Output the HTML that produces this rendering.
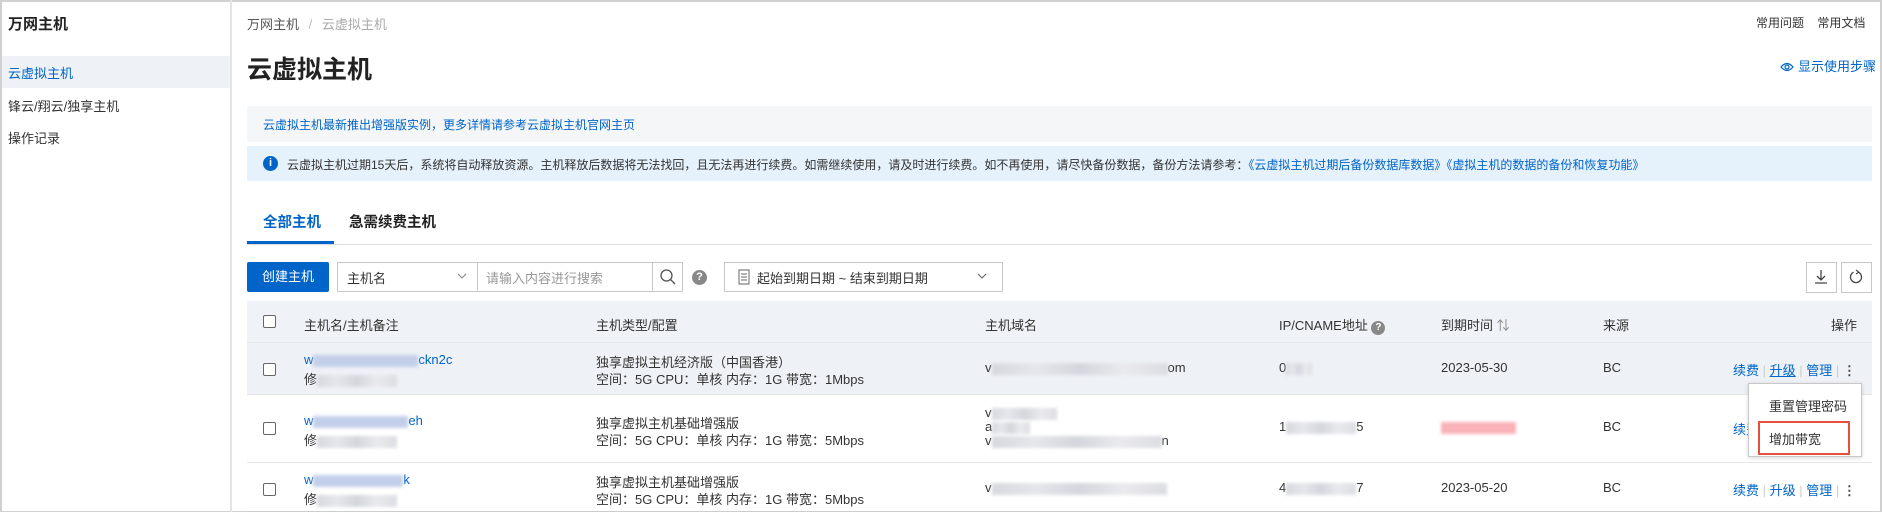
<!DOCTYPE html>
<html><head><meta charset="utf-8"><style>
*{box-sizing:border-box;margin:0;padding:0}
body{width:1882px;height:512px;overflow:hidden;background:#fff;font-family:"Liberation Sans","Noto Sans CJK SC",sans-serif;font-size:13px;color:#333;position:relative}
.frame{position:absolute;left:0;top:0;width:1882px;height:512px;border:2px solid #d0d0d0;border-bottom:1px solid #d0d0d0}
.a{position:absolute;white-space:nowrap}
.side{position:absolute;left:0;top:0;width:232px;height:512px;border-right:2px solid #e4e4e4}
.blue{color:#0064c8}
.blur{display:inline-block;height:12px;vertical-align:middle;background:linear-gradient(90deg,#d6d8de,#e6e7ec,#d3d6dc,#eaeaee,#dcdde2);filter:blur(1.5px)}
.hd{position:absolute;left:247px;top:301px;width:1625px;height:42px;background:#eff2f6;border-bottom:1px solid #e3e5e8}
.row{position:absolute;left:247px;width:1625px;border-bottom:1px solid #e3e5e8}
.cb{position:absolute;left:16px;width:13px;height:13px;border:1px solid #666;border-radius:2px;background:#fff}
.box{position:absolute;border:1px solid #c8c8c8;background:#fff}
</style></head><body>
<div class="frame"></div>
<div class="side">
 <div class="a" style="left:8px;top:13px;font-size:15px;font-weight:bold;color:#222">万网主机</div>
 <div class="a" style="left:2px;top:56px;width:228px;height:32px;background:#eef1f5"></div>
 <div class="a blue" style="left:8px;top:63px;font-size:13px">云虚拟主机</div>
 <div class="a" style="left:8px;top:96px;font-size:13px">锋云/翔云/独享主机</div>
 <div class="a" style="left:8px;top:128px;font-size:13px">操作记录</div>
</div>
<div class="a" style="left:247px;top:14px;color:#555">万网主机 <span style="color:#bbb;margin:0 6px">/</span> <span style="color:#aaa">云虚拟主机</span></div>
<div class="a" style="left:1756px;top:14px;font-size:12px;color:#333">常用问题 &nbsp;&nbsp; 常用文档</div>
<div class="a" style="left:247px;top:50px;font-size:25px;font-weight:bold;color:#222">云虚拟主机</div>
<div class="a blue" style="left:1780px;top:56px;font-size:13px"><svg width="14" height="10" viewBox="0 0 14 10" style="vertical-align:-1px;margin-right:4px"><path d="M1 5Q7 -2 13 5Q7 12 1 5Z" fill="none" stroke="#0064c8" stroke-width="1.2"/><circle cx="7" cy="5" r="2" fill="none" stroke="#0064c8" stroke-width="1.2"/></svg>显示使用步骤</div>
<div class="a" style="left:247px;top:106px;width:1625px;height:36px;background:#f5f6f7"></div>
<div class="a blue" style="left:263px;top:116px;font-size:12px">云虚拟主机最新推出增强版实例，更多详情请参考云虚拟主机官网主页</div>
<div class="a" style="left:247px;top:146px;width:1625px;height:35px;background:#e5f1fb"></div>
<div class="a" style="left:263px;top:156px;width:15px;height:15px;border-radius:50%;background:#0064c8;color:#fff;font-size:11px;font-weight:bold;text-align:center;line-height:15px">i</div>
<div class="a" style="left:287px;top:156px;font-size:12px;color:#333">云虚拟主机过期15天后，系统将自动释放资源。主机释放后数据将无法找回，且无法再进行续费。如需继续使用，请及时进行续费。如不再使用，请尽快备份数据，备份方法请参考：<span class="blue">《云虚拟主机过期后备份数据库数据》《虚拟主机的数据的备份和恢复功能》</span></div>
<div class="a" style="left:263px;top:211px;font-size:14.5px;font-weight:bold" ><span class="blue">全部主机</span></div>
<div class="a" style="left:349px;top:211px;font-size:14.5px;font-weight:bold;color:#222">急需续费主机</div>
<div class="a" style="left:247px;top:244px;width:1625px;height:1px;background:#ddd"></div>
<div class="a" style="left:247px;top:241px;width:87px;height:3px;background:#0064c8"></div>
<div class="a" style="left:247px;top:262px;width:82px;height:30px;background:#0064c8;color:#fff;text-align:center;line-height:30px;border-radius:2px">创建主机</div>
<div class="box" style="left:337px;top:262px;width:346px;height:30px"></div>
<div class="a" style="left:477px;top:262px;width:1px;height:30px;background:#c8c8c8"></div>
<div class="a" style="left:652px;top:262px;width:1px;height:30px;background:#c8c8c8"></div>
<div class="a" style="left:347px;top:268px">主机名</div>
<svg class="a" style="left:457px;top:273px" width="10" height="7" viewBox="0 0 10 7"><path d="M1 1l4 4 4-4" fill="none" stroke="#888" stroke-width="1.1"/></svg>
<div class="a" style="left:486px;top:268px;color:#999">请输入内容进行搜索</div>
<svg class="a" style="left:659px;top:268px" width="18" height="18" viewBox="0 0 18 18"><circle cx="7.5" cy="7.5" r="5.5" fill="none" stroke="#555" stroke-width="1.3"/><path d="M11.5 11.5L16 16" stroke="#555" stroke-width="1.3"/></svg>
<div class="a" style="left:692px;top:270px;width:15px;height:15px;border-radius:50%;background:#888;color:#fff;font-size:11px;font-weight:bold;text-align:center;line-height:15px">?</div>
<div class="box" style="left:724px;top:262px;width:279px;height:30px"></div>
<svg class="a" style="left:738px;top:269px" width="12" height="16" viewBox="0 0 12 16"><rect x="1" y="1" width="10" height="14" fill="none" stroke="#666"/><path d="M3 5h6M3 8h6M3 11h6" stroke="#666"/></svg>
<div class="a" style="left:757px;top:268px">起始到期日期 ~ 结束到期日期</div>
<svg class="a" style="left:977px;top:273px" width="10" height="7" viewBox="0 0 10 7"><path d="M1 1l4 4 4-4" fill="none" stroke="#666" stroke-width="1.1"/></svg>
<div class="box" style="left:1806px;top:262px;width:31px;height:31px"></div>
<svg class="a" style="left:1813px;top:268px" width="16" height="18" viewBox="0 0 16 18"><path d="M8 2v10M4 8l4 4 4-4M2 15h12" fill="none" stroke="#444" stroke-width="1.3"/></svg>
<div class="box" style="left:1841px;top:262px;width:31px;height:31px"></div>
<svg class="a" style="left:1848px;top:269px" width="16" height="16" viewBox="0 0 16 16"><path d="M10.5 3.2A5.5 5.5 0 1 1 5.5 3.2" fill="none" stroke="#444" stroke-width="1.3"/><path d="M8 1l2.8 2.2L8 5" fill="none" stroke="#444" stroke-width="1.2"/></svg>
<div class="hd">
 <div class="cb" style="top:14px"></div>
 <div class="a" style="left:57px;top:14px">主机名/主机备注</div>
 <div class="a" style="left:349px;top:14px">主机类型/配置</div>
 <div class="a" style="left:738px;top:14px">主机域名</div>
 <div class="a" style="left:1032px;top:14px">IP/CNAME地址 <span style="display:inline-block;width:14px;height:14px;border-radius:50%;background:#888;color:#fff;font-size:10px;font-weight:bold;text-align:center;line-height:14px">?</span></div>
 <div class="a" style="left:1194px;top:14px">到期时间 <span style="color:#888">⇅</span></div>
 <div class="a" style="left:1356px;top:14px">来源</div>
 <div class="a" style="left:1584px;top:14px">操作</div>
</div>
<div class="row" style="top:343px;height:52px;background:#eef1f6">
 <div class="cb" style="top:20px"></div>
 <div class="a blue" style="left:57px;top:9px">w<span class="blur" style="width:105px;background:#c3cfea"></span>ckn2c</div>
 <div class="a" style="left:57px;top:26px">修<span class="blur" style="width:80px"></span></div>
 <div class="a" style="left:349px;top:9px">独享虚拟主机经济版（中国香港）</div>
 <div class="a" style="left:349px;top:26px">空间：5G CPU：单核 内存：1G 带宽：1Mbps</div>
 <div class="a" style="left:738px;top:17px">v<span class="blur" style="width:176px"></span>om</div>
 <div class="a" style="left:1032px;top:17px">0<span class="blur" style="width:26px"></span></div>
 <div class="a" style="left:1194px;top:17px">2023-05-30</div>
 <div class="a" style="left:1356px;top:17px">BC</div>
 <div class="a blue" style="left:1486px;top:17px">续费 <span style="color:#ccc">|</span> <u>升级</u> <span style="color:#ccc">|</span> 管理 <span style="color:#ccc">|</span> <b style="color:#444">⋮</b></div>
</div>
<div class="row" style="top:395px;height:68px">
 <div class="cb" style="top:27px"></div>
 <div class="a blue" style="left:57px;top:18px">w<span class="blur" style="width:95px;background:#c3cfea"></span>eh</div>
 <div class="a" style="left:57px;top:35px">修<span class="blur" style="width:80px"></span></div>
 <div class="a" style="left:349px;top:18px">独享虚拟主机基础增强版</div>
 <div class="a" style="left:349px;top:35px">空间：5G CPU：单核 内存：1G 带宽：5Mbps</div>
 <div class="a" style="left:738px;top:10px">v<span class="blur" style="width:65px"></span></div>
 <div class="a" style="left:738px;top:24px">a<span class="blur" style="width:38px"></span></div>
 <div class="a" style="left:738px;top:38px">v<span class="blur" style="width:170px"></span>n</div>
 <div class="a" style="left:1032px;top:24px">1<span class="blur" style="width:70px"></span>5</div>
 <div class="a" style="left:1194px;top:24px"><span class="blur" style="width:75px;background:#f8b2b8"></span></div>
 <div class="a" style="left:1356px;top:24px">BC</div>
 <div class="a blue" style="left:1486px;top:24px">续费</div>
</div>
<div class="row" style="top:463px;height:49px;border-bottom:1px solid #ccc">
 <div class="cb" style="top:20px"></div>
 <div class="a blue" style="left:57px;top:9px">w<span class="blur" style="width:90px;background:#c3cfea"></span>k</div>
 <div class="a" style="left:57px;top:26px">修<span class="blur" style="width:80px"></span></div>
 <div class="a" style="left:349px;top:9px">独享虚拟主机基础增强版</div>
 <div class="a" style="left:349px;top:26px">空间：5G CPU：单核 内存：1G 带宽：5Mbps</div>
 <div class="a" style="left:738px;top:17px">v<span class="blur" style="width:175px"></span></div>
 <div class="a" style="left:1032px;top:17px">4<span class="blur" style="width:70px"></span>7</div>
 <div class="a" style="left:1194px;top:17px">2023-05-20</div>
 <div class="a" style="left:1356px;top:17px">BC</div>
 <div class="a blue" style="left:1486px;top:17px">续费 <span style="color:#ccc">|</span> 升级 <span style="color:#ccc">|</span> 管理 <span style="color:#ccc">|</span> <b style="color:#444">⋮</b></div>
</div>
<div class="box" style="left:1748px;top:383px;width:114px;height:74px;box-shadow:0 1px 4px rgba(0,0,0,.15)"></div>
<div class="a" style="left:1769px;top:396px">重置管理密码</div>
<div class="a" style="left:1758px;top:421px;width:92px;height:34px;border:2px solid #e8503a"></div>
<div class="a" style="left:1769px;top:429px">增加带宽</div>
</body></html>
